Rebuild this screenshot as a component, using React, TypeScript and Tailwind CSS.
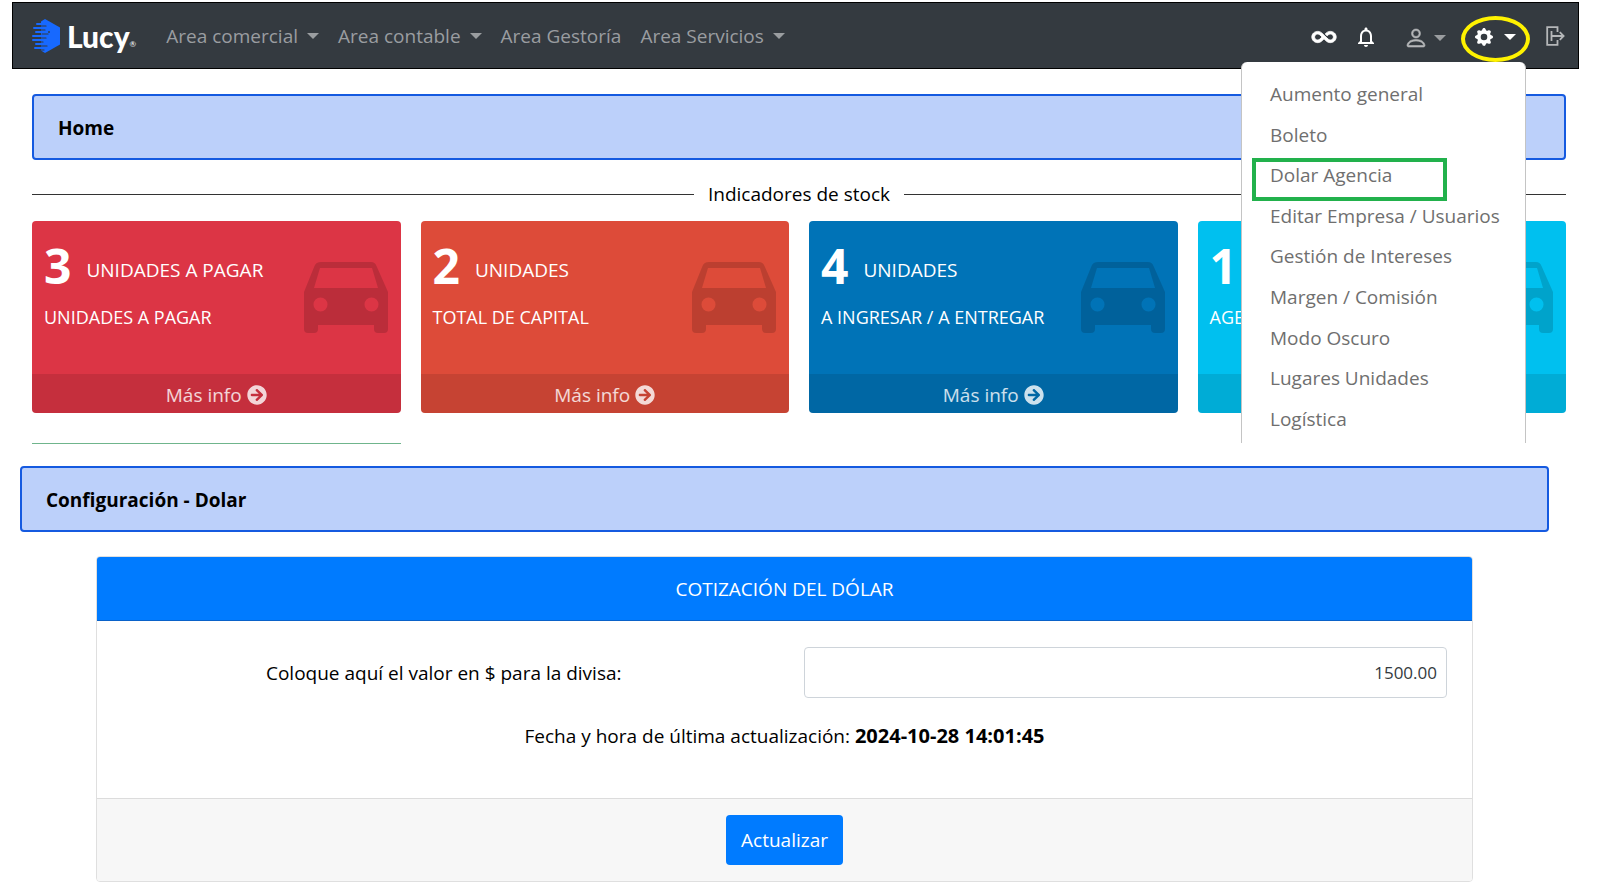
import { useState } from "react";
import { BsGearFill, BsPerson } from "react-icons/bs";
import { FaArrowCircleRight } from "react-icons/fa";
import { IoMdInfinite } from "react-icons/io";
import { MdNotificationsNone } from "react-icons/md";

function Caret() {
  return (
    <svg viewBox="0 0 12 6" className="h-1.5 w-3 shrink-0 fill-current" aria-hidden="true">
      <path d="M0 0h12L6 6z" />
    </svg>
  );
}

function LogoMark() {
  return (
    <svg viewBox="0 0 28 34" className="h-[34px] w-7" aria-hidden="true">
      <path d="M13 0 28 8.500V25.500L13 34l-4-2.500V2.500z" fill="#1769ff" />
      <g stroke="#1769ff" strokeWidth="2" strokeLinecap="round">
        <path d="M5 5h8M2 9h8M4 13h8M1 17h9M1 21h10M4 25h8M3 29h9" />
      </g>
      <g stroke="#343a40" strokeWidth="1.200" strokeLinecap="round">
        <path d="M7 7h7M8 11h5M10 15h6M2 15h4M8 19h6M3 23h8M9 27h6M8 31h4" />
      </g>
      <circle cx="17" cy="13" r="0.900" fill="#343a40" />
    </svg>
  );
}

function ExitIcon() {
  return (
    <svg viewBox="0 0 19 20" className="h-5 w-[19px]" fill="none" stroke="currentColor" strokeWidth="1.800" aria-hidden="true">
      <path d="M11.500 6V1.200H1.200v17.600h10.300V14" />
      <path d="M5 10h12.500M13.800 6.200 17.600 10l-3.800 3.800M5.500 5v10" />
    </svg>
  );
}

function CarIcon() {
  return (
    <svg viewBox="0 0 84 71" className="h-[71px] w-[84px] fill-black/15" aria-hidden="true">
      <path
        fillRule="evenodd"
        d="M17 0H67Q71 0 72.500 4L84 30V67Q84 71 80 71H74Q70 71 70 67V63H14V67Q14 71 10 71H4Q0 71 0 67V30L10.500 4Q12 0 17 0ZM16 6 10 26H74L68 6ZM9.500 42.500a7 7 0 1 0 14 0a7 7 0 1 0-14 0ZM60.500 42.500a7 7 0 1 0 14 0a7 7 0 1 0-14 0Z"
      />
    </svg>
  );
}

const areas = [
  { label: "Area comercial", menu: true },
  { label: "Area contable", menu: true },
  { label: "Area Gestoría", menu: false },
  { label: "Area Servicios", menu: true },
];

const settings = [
  "Aumento general",
  "Boleto",
  "Dolar Agencia",
  "Editar Empresa / Usuarios",
  "Gestión de Intereses",
  "Margen / Comisión",
  "Modo Oscuro",
  "Lugares Unidades",
  "Logística",
];

const cards = [
  { count: "3", unit: "UNIDADES A PAGAR", detail: "UNIDADES A PAGAR", more: "Más info", color: "bg-[#dc3545]" },
  { count: "2", unit: "UNIDADES", detail: "TOTAL DE CAPITAL", more: "Más info", color: "bg-[#dd4b39]" },
  { count: "4", unit: "UNIDADES", detail: "A INGRESAR / A ENTREGAR", more: "Más info", color: "bg-[#0073b7]" },
  { count: "1", unit: "", detail: "AGE", more: "", color: "bg-[#00c0ef]" },
];

function SettingsMenu() {
  return (
    <ul className="absolute top-[52px] right-1 z-10 grid h-[381px] w-[285px] auto-rows-fr rounded-t-md border-x border-[#c4c4c4] bg-white pt-3 pb-1 text-[#6f6f6f]">
      {settings.map((item) => (
        <li key={item} className="relative flex items-center pl-7">
          <a href="#" className="whitespace-nowrap">{item}</a>
          {item === "Dolar Agencia" && (
            <span className="pointer-events-none absolute top-[3px] left-[10px] h-[43px] w-[195px] border-4 border-[#22b14c]" />
          )}
        </li>
      ))}
    </ul>
  );
}

function Navbar() {
  return (
    <nav className="relative mr-[21px] ml-3 flex h-[67px] items-center border border-black bg-[#343a40] pl-[19px] text-[#9a9da0]">
      <a href="#" className="flex items-center gap-[7px] text-white">
        <LogoMark />
        <span className="flex items-end font-[Lato,sans-serif] text-[30px] leading-8 font-black">
          Lucy<span className="text-[8px] leading-4 font-normal">®</span>
        </span>
      </a>
      <ul className="ml-[30px] flex items-center gap-[19px]">
        {areas.map((area) => (
          <li key={area.label}>
            <a href="#" className="flex items-center gap-[9px] whitespace-nowrap">
              {area.label}
              {area.menu && <Caret />}
            </a>
          </li>
        ))}
      </ul>
      <div className="ml-auto flex h-full items-center pt-[7px]">
        <button type="button" aria-label="Infinito" className="pb-1 text-white">
          <IoMdInfinite size={30} strokeWidth={14} />
        </button>
        <button type="button" aria-label="Notificaciones" className="ml-[15px] pb-1 text-white">
          <MdNotificationsNone size={24} />
        </button>
        <button type="button" aria-label="Usuario" className="ml-[26px] flex items-center gap-1.5 pb-0.5">
          <BsPerson size={24} strokeWidth={0.4} className="text-[#b5b7b9]" />
          <Caret />
        </button>
        <div className="relative ml-[15px] flex h-full items-center">
          <button type="button" aria-label="Configuración" className="flex h-[46px] w-[69px] items-center justify-center gap-[11px] rounded-[50%] border-4 border-[#fff200] pb-1 text-white">
            <BsGearFill size={18} />
            <Caret />
          </button>
          <SettingsMenu />
        </div>
        <button type="button" aria-label="Salir" className="mr-[13px] ml-4 pb-1.5 text-[#b5b7b9]">
          <ExitIcon />
        </button>
      </div>
    </nav>
  );
}

function TitleBar({ children }: { children: string }) {
  return (
    <h1 className="flex h-[66px] items-center rounded border-2 border-[#155ae0] bg-[#bcd0fa] px-6 pt-0.5 font-bold">
      {children}
    </h1>
  );
}

function StockCard({ card }: { card: (typeof cards)[number] }) {
  return (
    <article className={"flex h-[192px] flex-col overflow-hidden rounded-sm text-white " + card.color}>
      <div className="flex flex-1 items-start justify-between pr-[13px] pl-3">
        <div className="pt-5">
          <p className="flex items-center gap-[15px]">
            <b className="text-5xl leading-[50px] font-bold">{card.count}</b>
            <span className="pt-2 whitespace-nowrap">{card.unit}</span>
          </p>
          <p className="mt-3 text-lg leading-7 whitespace-nowrap">{card.detail}</p>
        </div>
        <div className="pt-[41px]">
          <CarIcon />
        </div>
      </div>
      <a href="#" aria-label="Más info" className="flex h-[39px] items-center justify-center gap-[5px] bg-black/10 pt-0.5 text-white/80">
        {card.more} <FaArrowCircleRight size={20} />
      </a>
    </article>
  );
}

export default function App() {
  const [value, setValue] = useState("1500.00");

  return (
    <div className="bg-white pt-0.5 pb-3 font-['Open_Sans','Noto_Sans',sans-serif] text-[19px] leading-7 text-black">
      <Navbar />

      <main>
        <section className="mt-[25px] mr-[34px] ml-8">
          <TitleBar>Home</TitleBar>
          <div className="mt-5 flex items-center gap-[14px]">
            <hr className="flex-1 border-[#333]" />
            <h2>Indicadores de stock</h2>
            <hr className="flex-1 border-[#333]" />
          </div>
          <div className="mt-[13px] grid grid-cols-4 gap-5">
            {cards.map((card) => (
              <StockCard key={card.color} card={card} />
            ))}
          </div>
          <div className="mt-[30px] grid grid-cols-4 gap-5">
            <div className="h-px bg-[#6fb58c]" />
          </div>
        </section>

        <section className="mt-[22px] mr-[51px] ml-5">
          <TitleBar>Configuración - Dolar</TitleBar>
          <form
            className="mx-[76px] mt-6 overflow-hidden rounded border border-[#dfdfdf]"
            onSubmit={(event) => event.preventDefault()}
          >
            <h2 className="flex h-[64px] items-center justify-center border-b border-[#0a62c9] bg-[#007bff] text-white">
              COTIZACIÓN DEL DÓLAR
            </h2>
            <div className="px-[25px] pt-[26px] pb-12">
              <div className="grid grid-cols-2 items-center gap-[38px]">
                <label htmlFor="cotizacion" className="text-center">
                  Coloque aquí el valor en $ para la divisa:
                </label>
                <input
                  id="cotizacion"
                  type="text"
                  value={value}
                  onChange={(event) => setValue(event.target.value)}
                  className="h-[51px] w-full rounded border border-[#ced4da] px-[9px] text-right text-[17px] text-[#343a40]"
                />
              </div>
              <p className="mt-6 text-center">
                Fecha y hora de última actualización: <b className="text-xl leading-7 font-bold">2024-10-28 14:01:45</b>
              </p>
            </div>
            <div className="flex justify-center border-t border-[#dcdcdc] bg-[#f7f7f7] py-4">
              <button type="submit" className="h-[50px] rounded bg-[#007bff] px-[15px] text-white">
                Actualizar
              </button>
            </div>
          </form>
        </section>
      </main>
    </div>
  );
}
